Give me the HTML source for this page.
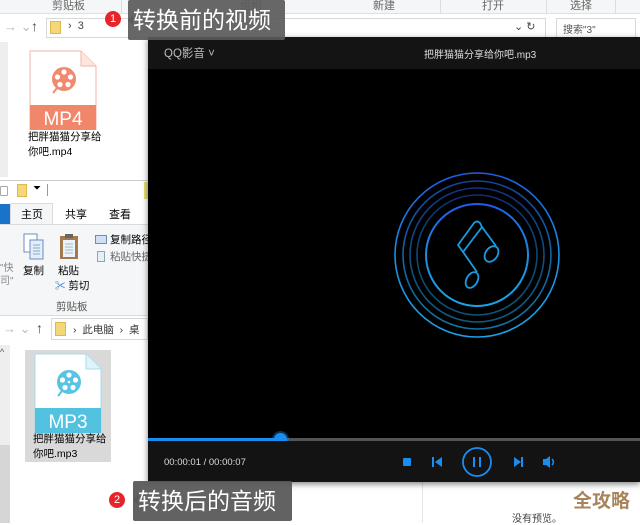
<!DOCTYPE html>
<html><head><meta charset="utf-8"><style>
*{margin:0;padding:0;box-sizing:border-box}
body{width:640px;height:523px;overflow:hidden;background:#fff;position:relative;font-family:"Liberation Sans","Noto Sans CJK SC",sans-serif;font-size:11px;color:#000}
.a{position:absolute}
.t{white-space:nowrap}
</style></head><body>
<div class="a" style="left:0;top:0;width:640px;height:14px;background:#f5f6f7;border-bottom:1px solid #e0e0e0"></div>
<div class="a t" style="left:52px;top:-3px;color:#666;font-size:11px">剪贴板</div>
<div class="a t" style="left:240px;top:-3px;color:#666;font-size:11px">组织</div>
<div class="a t" style="left:373px;top:-3px;color:#666;font-size:11px">新建</div>
<div class="a t" style="left:482px;top:-3px;color:#666;font-size:11px">打开</div>
<div class="a t" style="left:570px;top:-3px;color:#666;font-size:11px">选择</div>
<div class="a" style="left:121px;top:0;width:1px;height:14px;background:#ddd"></div>
<div class="a" style="left:440px;top:0;width:1px;height:14px;background:#ddd"></div>
<div class="a" style="left:546px;top:0;width:1px;height:14px;background:#ddd"></div>
<div class="a" style="left:615px;top:0;width:1px;height:14px;background:#ddd"></div>
<div class="a t" style="left:4px;top:19px;color:#bbb;font-size:13px">→ ⌄</div>
<div class="a t" style="left:31px;top:18px;color:#444;font-size:14px">↑</div>
<div class="a" style="left:46px;top:18px;width:500px;height:20px;border:1px solid #d9d9d9"></div>
<div class="a" style="left:50px;top:21px;width:11px;height:13px;background:#f5d77a;border:1px solid #e0b94e"></div>
<div class="a t" style="left:68px;top:20px;color:#444">›&nbsp;&nbsp;3</div>
<div class="a t" style="left:514px;top:20px;color:#444">⌄ ↻</div>
<div class="a" style="left:556px;top:18px;width:80px;height:20px;border:1px solid #d9d9d9"></div>
<div class="a t" style="left:563px;top:21px;color:#555;font-size:10px">搜索"3"</div>
<div class="a" style="left:0;top:42px;width:8px;height:135px;background:#eee"></div>
<svg class="a" style="left:29px;top:50px" width="68" height="80" viewBox="0 0 68 80">
<path d="M1 1H52L67 16V80H1Z" fill="#fff" stroke="#f3b6a5"/>
<path d="M52 1V16H67" fill="#fde6dd" stroke="#f3b6a5"/>
<rect x="1" y="55" width="66" height="25" fill="#f0866a"/>
<text x="34" y="75" fill="#fff" font-size="19" text-anchor="middle" font-family="Liberation Sans">MP4</text>
<circle cx="35" cy="29" r="12" fill="#ef8a6f"/>
<g fill="#fff"><circle cx="35" cy="22" r="2.6"/><circle cx="28.5" cy="27" r="2.6"/><circle cx="41.5" cy="27" r="2.6"/><circle cx="31" cy="34.5" r="2.6"/><circle cx="39" cy="34.5" r="2.6"/></g>
<path d="M28 38L24 43" stroke="#ef8a6f" stroke-width="2"/>
</svg>
<div class="a" style="left:28px;top:130px;font-size:10.5px;line-height:15px">把胖猫猫分享给<br>你吧.mp4</div>
<div class="a" style="left:0;top:180px;width:148px;height:343px;background:#fff;border-top:1px solid #ccc"></div>
<div class="a" style="left:0;top:186px;width:8px;height:10px;border:1px solid #aaa;border-radius:1px"></div>
<div class="a" style="left:17px;top:184px;width:10px;height:13px;background:#f5d77a;border:1px solid #e0b94e"></div>
<div class="a t" style="left:33px;top:183px;font-size:10px">⏷</div>
<div class="a" style="left:47px;top:184px;width:1px;height:12px;background:#999"></div>
<div class="a" style="left:144px;top:182px;width:4px;height:17px;background:#e6e07a"></div>
<div class="a" style="left:0;top:204px;width:10px;height:20px;background:#1a73c9"></div>
<div class="a" style="left:10px;top:203px;width:43px;height:22px;background:#f5f6f7;border:1px solid #dadbdc;border-bottom:none"></div>
<div class="a t" style="left:21px;top:206px;font-size:11px">主页</div>
<div class="a t" style="left:65px;top:206px;font-size:11px">共享</div>
<div class="a t" style="left:109px;top:206px;font-size:11px">查看</div>
<div class="a" style="left:0;top:224px;width:148px;height:92px;background:#f5f6f7;border-top:1px solid #dadbdc;border-bottom:1px solid #dadbdc"></div>
<div class="a t" style="left:0;top:262px;color:#888;font-size:10px;line-height:13px">"快<br>司"</div>
<svg class="a" style="left:23px;top:233px" width="22" height="28"><rect x="1" y="1" width="13" height="18" fill="#fff" stroke="#6a8fbf"/><rect x="7" y="7" width="13" height="19" fill="#e4eefb" stroke="#6a8fbf"/><path d="M10 12h7M10 15h7M10 18h7M10 21h7" stroke="#8aa6cc"/></svg>
<div class="a t" style="left:23px;top:263px;font-size:10.5px">复制</div>
<svg class="a" style="left:58px;top:233px" width="22" height="28"><rect x="2" y="3" width="18" height="23" fill="#a47a4c"/><rect x="5" y="7" width="12" height="17" fill="#eef3fb"/><rect x="7" y="1" width="8" height="4" fill="#666"/><path d="M7 11h8M7 14h8M7 17h8M7 20h8" stroke="#9bb"/></svg>
<div class="a t" style="left:58px;top:263px;font-size:10.5px">粘贴</div>
<div class="a t" style="left:55px;top:278px;font-size:10.5px"><span style="color:#2a6fc9">✂</span> 剪切</div>
<div class="a t" style="left:56px;top:299px;font-size:10.5px;color:#555">剪贴板</div>
<div class="a" style="left:95px;top:235px;width:12px;height:9px;background:#cfe0f4;border:1px solid #6a8fbf"></div>
<div class="a t" style="left:110px;top:232px;font-size:10.5px">复制路径</div>
<div class="a" style="left:97px;top:251px;width:8px;height:11px;background:#e6eef8;border:1px solid #8aa"></div>
<div class="a t" style="left:110px;top:249px;font-size:10.5px;color:#666">粘贴快捷</div>
<div class="a t" style="left:3px;top:321px;color:#bbb;font-size:13px">→ ⌄</div>
<div class="a t" style="left:36px;top:320px;color:#444;font-size:14px">↑</div>
<div class="a" style="left:51px;top:318px;width:97px;height:22px;border:1px solid #d9d9d9"></div>
<div class="a" style="left:55px;top:322px;width:11px;height:14px;background:#f5d77a;border:1px solid #e0b94e"></div>
<div class="a t" style="left:73px;top:322px;color:#333;font-size:10.5px">›&nbsp;&nbsp;此电脑&nbsp;&nbsp;›&nbsp;&nbsp;桌</div>
<div class="a" style="left:0;top:345px;width:10px;height:178px;background:#eee"></div>
<div class="a t" style="left:0;top:347px;font-size:9px;color:#555">^</div>
<div class="a" style="left:0;top:445px;width:10px;height:78px;background:#d6d6d6"></div>
<div class="a" style="left:25px;top:350px;width:86px;height:112px;background:#d9d9d9"></div>
<svg class="a" style="left:34px;top:353px" width="68" height="80" viewBox="0 0 68 80">
<path d="M1 1H52L67 16V80H1Z" fill="#fff" stroke="#a6dced"/>
<path d="M52 1V16H67" fill="#dff3fa" stroke="#a6dced"/>
<rect x="1" y="55" width="66" height="25" fill="#52c2e0"/>
<text x="34" y="75" fill="#fff" font-size="19" text-anchor="middle" font-family="Liberation Sans">MP3</text>
<circle cx="35" cy="29" r="12" fill="#56c4e2"/>
<g fill="#fff"><circle cx="35" cy="22" r="2.6"/><circle cx="28.5" cy="27" r="2.6"/><circle cx="41.5" cy="27" r="2.6"/><circle cx="31" cy="34.5" r="2.6"/><circle cx="39" cy="34.5" r="2.6"/><circle cx="35" cy="29" r="1.3"/></g>
<path d="M28 38L24 43" stroke="#56c4e2" stroke-width="2"/>
</svg>
<div class="a" style="left:33px;top:432px;font-size:10.5px;line-height:15px">把胖猫猫分享给<br>你吧.mp3</div>
<div class="a" style="left:422px;top:482px;width:1px;height:41px;background:#e6e6e6"></div>
<div class="a t" style="left:512px;top:510px;font-size:10px;color:#444">没有预览。</div>
<div class="a t" style="left:573px;top:486px;font-size:19px;font-weight:bold;color:#a8845a">全攻略</div>
<div class="a" style="left:148px;top:37px;width:492px;height:445px;background:#000;box-shadow:0 2px 6px rgba(0,0,0,.5)"></div>
<div class="a" style="left:148px;top:37px;width:492px;height:32px;background:#141414"></div>
<div class="a t" style="left:164px;top:45px;color:#bbb;font-size:11.5px">QQ影音 ˅</div>
<div class="a t" style="left:424px;top:46px;color:#ddd;font-size:10px">把胖猫猫分享给你吧.mp3</div>
<svg class="a" style="left:392px;top:170px" width="170" height="170" viewBox="0 0 170 170">
<defs><linearGradient id="g" x1="0" y1="0" x2="0" y2="1"><stop offset="0" stop-color="#1f5de8"/><stop offset=".5" stop-color="#1a8ee0"/><stop offset="1" stop-color="#1ba3e8"/></linearGradient></defs>
<g fill="none" stroke="url(#g)" stroke-width="1.6">
<circle cx="85" cy="85" r="82"/>
<circle cx="85" cy="85" r="74" stroke-opacity=".7"/>
<circle cx="85" cy="85" r="67" stroke-opacity=".55"/>
<circle cx="85" cy="85" r="60" stroke-opacity=".5"/>
<circle cx="85" cy="85" r="51" stroke-width="2"/>
</g>
<g fill="none" stroke="#1a9be0" stroke-width="1.8" stroke-linejoin="round">
<path d="M66 75L82 53Q85 50 88 53L90 57L71 82Z"/>
<path d="M71 82L85 102"/>
<path d="M90 57L104 76"/>
<ellipse cx="99.5" cy="84" rx="6" ry="8.5" transform="rotate(35 99.5 84)"/>
<ellipse cx="80" cy="110" rx="5.5" ry="8.5" transform="rotate(30 80 110)"/>
</g>
</svg>
<div class="a" style="left:148px;top:438px;width:492px;height:3px;background:#555"></div>
<div class="a" style="left:148px;top:438px;width:133px;height:3px;background:#1a8ef0"></div>
<div class="a" style="left:274px;top:433px;width:13px;height:13px;border-radius:50%;background:#1a8ef0;box-shadow:0 0 0 2px rgba(26,142,240,.35)"></div>
<div class="a" style="left:148px;top:441px;width:492px;height:41px;background:#131313"></div>
<div class="a t" style="left:164px;top:457px;color:#ddd;font-size:9.5px">00:00:01 / 00:00:07</div>
<svg class="a" style="left:398px;top:446px" width="162" height="34" viewBox="0 0 162 34">
<g fill="#1a8ef0"><rect x="5" y="12" width="8" height="8" rx="1"/>
<rect x="34" y="11" width="2" height="10"/><path d="M44 11v10l-7-5z"/>
<path d="M116 11v10l7-5z"/><rect x="123" y="11" width="2" height="10"/>
<path d="M145 13h3l4-3v12l-4-3h-3z"/><path d="M154 13a4 4 0 0 1 0 6" stroke="#1a8ef0" stroke-width="1.5" fill="none"/>
<rect x="75" y="11" width="2" height="10"/><rect x="81" y="11" width="2" height="10"/></g>
<circle cx="79" cy="16" r="14" fill="none" stroke="#1a8ef0" stroke-width="1.8"/>
</svg>
<div class="a" style="left:105px;top:11px;width:16px;height:16px;border-radius:50%;background:#e8242a;color:#fff;font-size:11px;text-align:center;line-height:16px">1</div>
<div class="a" style="left:123px;top:15px;width:0;height:0;border:5px solid transparent;border-right-color:#666"></div>
<div class="a t" style="left:128px;top:0;width:157px;height:40px;background:rgba(90,90,90,.92);border-radius:2px;color:#fff;font-size:23px;line-height:40px;padding-left:5px">转换前的视频</div>
<div class="a" style="left:109px;top:492px;width:16px;height:16px;border-radius:50%;background:#e8242a;color:#fff;font-size:11px;text-align:center;line-height:16px">2</div>
<div class="a" style="left:128px;top:495px;width:0;height:0;border:5px solid transparent;border-right-color:#666"></div>
<div class="a t" style="left:133px;top:481px;width:159px;height:40px;background:rgba(90,90,90,.95);border-radius:2px;color:#fff;font-size:23px;line-height:40px;padding-left:5px">转换后的音频</div>
</body></html>
